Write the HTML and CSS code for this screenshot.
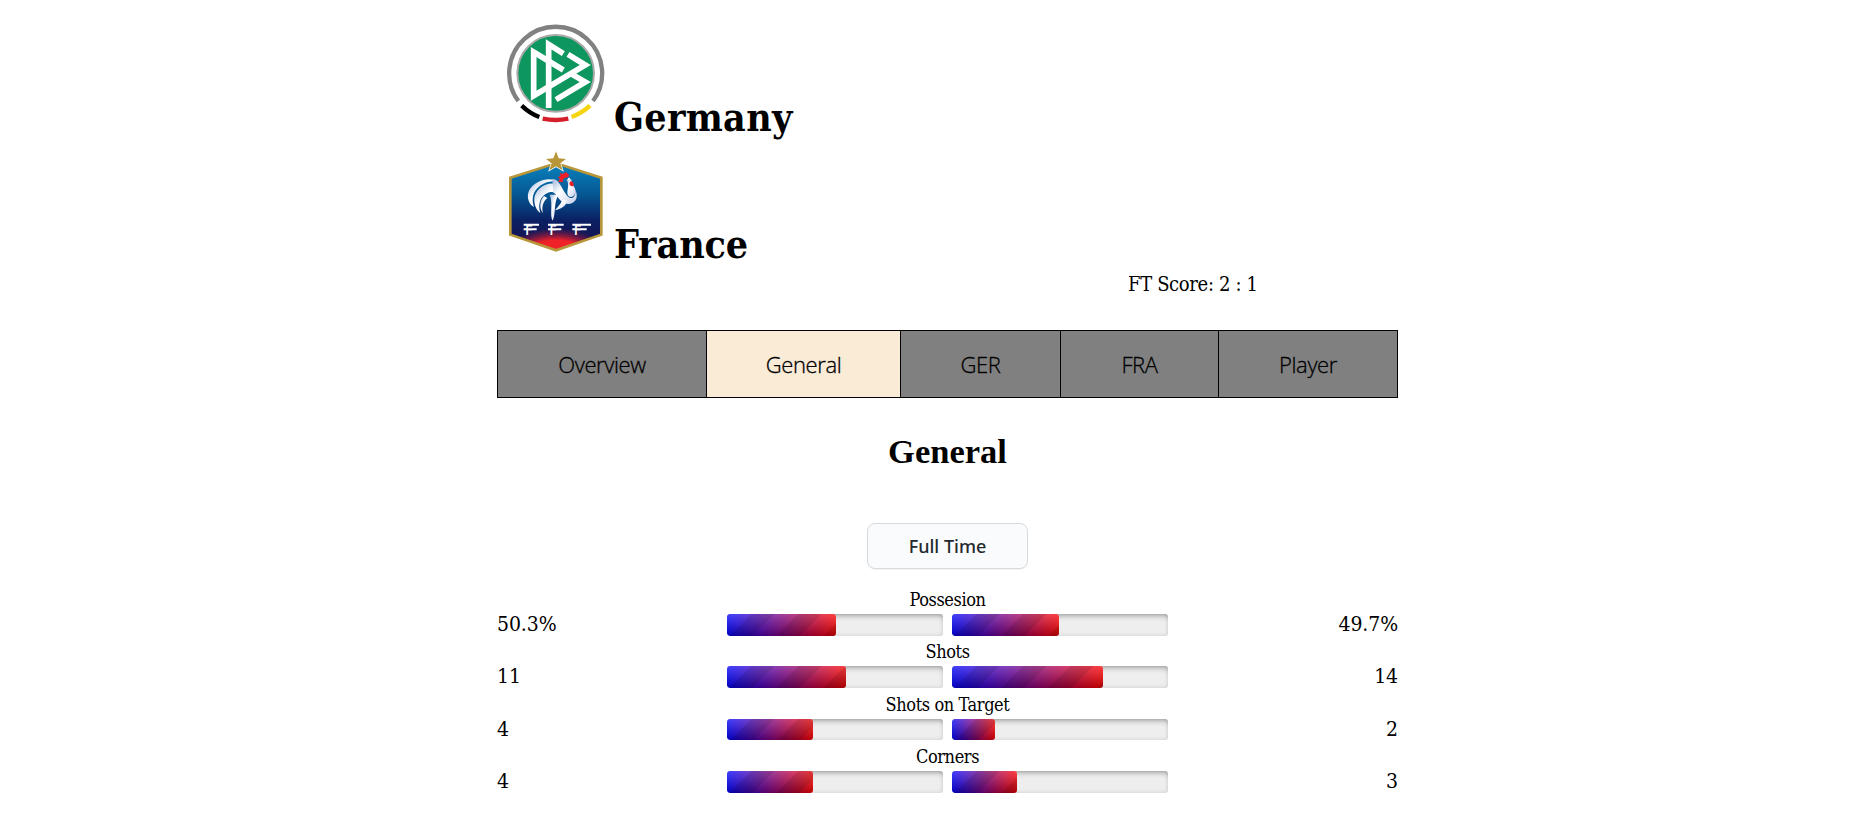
FILE: index.html
```html
<!DOCTYPE html>
<html lang="en">
<head>
<meta charset="utf-8">
<title>Germany vs France</title>
<link rel="stylesheet" href="styles.css">
</head>
<body>
<main class="match">
  <header class="teams">
    <h1 class="team">
      <svg class="crest" viewBox="0 0 330 330" aria-label="DFB">
        <g transform="translate(-30 -24)">
          <g fill="none" stroke-width="13">
            <path d="M85 273A139.500 139.500 0 1 1 309 273" stroke="#808281"/>
            <path d="M95 287Q120 311 148 321" stroke="#000"/>
            <path d="M158 326Q197 334 235 326" stroke="#d51f2b"/>
            <path d="M245 321Q278 308 300 287" stroke="#f6d40f"/>
          </g>
          <circle cx="197" cy="190" r="115" fill="#0e965f" stroke="#a9aaa9" stroke-width="6"/>
          <g fill="none" stroke="#fff" stroke-width="17">
            <path d="M176 294V103L220 131"/>
            <path d="M220 180L131 126V257L286 165L234 133"/>
            <path d="M241 190L286 216L198 269"/>
          </g>
        </g>
      </svg>
      <span class="team-name">Germany</span>
    </h1>
    <h1 class="team">
      <svg class="crest" viewBox="0 0 330 330" aria-label="FFF">
        <defs>
          <linearGradient id="shield" x1="0" y1="0" x2="0" y2="1">
            <stop offset="0" stop-color="#0a83bd"/>
            <stop offset=".38" stop-color="#055490"/>
            <stop offset=".66" stop-color="#0b1f62"/>
            <stop offset="1" stop-color="#1c0f4a"/>
          </linearGradient>
          <radialGradient id="glow" gradientUnits="userSpaceOnUse" cx="0" cy="0" r="1" gradientTransform="translate(167 325) scale(155 78)">
            <stop offset=".55" stop-color="#ee2028"/>
            <stop offset="1" stop-color="#a01840" stop-opacity="0"/>
          </radialGradient>
          <linearGradient id="feather" x1="0" y1="0" x2="1" y2="1">
            <stop offset="0" stop-color="#9fb4dc"/>
            <stop offset=".4" stop-color="#fff"/>
            <stop offset="1" stop-color="#c3cde8"/>
          </linearGradient>
        </defs>
        <g transform="translate(0 3)">
        <path d="M168 52L304 95V266L168 313L31 266V95Z" fill="url(#shield)"/>
        <path d="M168 52L304 95V266L168 313L31 266V95Z" fill="url(#glow)" stroke="#b8963a" stroke-width="8"/>
        <path d="M168 16L176 37L198 39L181 52L188 73L168 61L148 73L155 52L138 39L160 37Z" fill="#b8963a" stroke="#fff" stroke-width="4" paint-order="stroke"/>
        <g fill="url(#feather)">
          <path d="M176 107C146 90 105 103 88 132C77 154 88 176 102 183C94 157 98 136 120 119C137 107 156 104 176 107Z"/>
          <path d="M165 113C132 109 107 132 103 155C101 177 111 194 121 201C113 174 120 154 138 143C159 130 177 145 192 157C184 133 175 119 165 113Z"/>
          <path d="M132 150C119 162 117 186 129 202C124 180 130 166 142 156Z"/>
          <path d="M157 98C176 99 182 121 199 146C213 166 228 154 226 132C239 158 221 175 203 174C178 171 175 150 160 139Z"/>
          <path d="M199 101C208 110 203 127 202 140C202 153 217 159 224 145C234 127 214 119 214 101L207 97Z"/>
          <path d="M149 146L177 146C160 165 169 199 158 224C148 208 160 174 149 146Z"/>
          <path d="M203 165C195 183 183 188 165 193C178 178 184 170 188 159Z"/>
        </g>
        <path d="M174 107L180 98L173 94L182 89L179 82L191 83L197 78L207 86L205 94L195 95L189 101L188 109Z" fill="#ee1f27"/>
        <path d="M211 106Q222 106 221 119Q213 125 208 114Z" fill="#ee1f27"/>
        <circle cx="207" cy="98" r="3" fill="#fff"/>
        <text class="crest-text" x="75 148 221" y="266">FFF</text>
        <path d="M71 236H117M144 236H191M217 236H273M71 250H110M144 250H184M217 250H260" stroke="#fff" stroke-width="6"/>
        </g>
      </svg>
      <span class="team-name france">France</span>
    </h1>
  </header>
  <p class="score">FT Score: 2 : 1</p>
  <nav class="tabs">
    <a class="tab">Overview</a>
    <a class="tab active">General</a>
    <a class="tab">GER</a>
    <a class="tab">FRA</a>
    <a class="tab">Player</a>
  </nav>
  <h2 class="title">General</h2>
  <button class="period">Full Time</button>
  <section class="stats">
    <div class="stat">
      <span class="value">50.3%</span>
      <div class="middle"><span class="label">Possesion</span>
        <div class="meters"><div class="meter"><div class="fill" style="width:50.3%"></div></div><div class="meter"><div class="fill" style="width:49.7%"></div></div></div>
      </div>
      <span class="value right">49.7%</span>
    </div>
    <div class="stat">
      <span class="value">11</span>
      <div class="middle"><span class="label">Shots</span>
        <div class="meters"><div class="meter"><div class="fill" style="width:55%"></div></div><div class="meter"><div class="fill" style="width:70%"></div></div></div>
      </div>
      <span class="value right">14</span>
    </div>
    <div class="stat">
      <span class="value">4</span>
      <div class="middle"><span class="label">Shots on Target</span>
        <div class="meters"><div class="meter"><div class="fill" style="width:40%"></div></div><div class="meter"><div class="fill" style="width:20%"></div></div></div>
      </div>
      <span class="value right">2</span>
    </div>
    <div class="stat">
      <span class="value">4</span>
      <div class="middle"><span class="label">Corners</span>
        <div class="meters"><div class="meter"><div class="fill" style="width:40%"></div></div><div class="meter"><div class="fill" style="width:30%"></div></div></div>
      </div>
      <span class="value right">3</span>
    </div>
  </section>
</main>
</body>
</html>
```
FILE: styles.css
```css
* { box-sizing: border-box; }
body { margin: 0; background: #fff; color: #000; }
.match {
  width: 901px;
  margin-left: 497px;
  padding-top: 18px;
  display: flex;
  flex-direction: column;
  font-family: "DejaVu Serif Condensed", "DejaVu Serif", serif;
}
.team {
  display: flex;
  height: 127px;
  margin: 0;
  padding-left: 3px;
  gap: 4px;
  font-size: 39px;
  line-height: 46px;
}
.crest { width: 110px; height: 110px; flex: none; }
.crest-text { font: 600 42px "Open Sans", sans-serif; fill: #fff; }
.team-name { margin-top: 76px; letter-spacing: .3px; }
.team-name.france { letter-spacing: -.1px; }
.score {
  margin: 0;
  padding-left: 631px;
  height: 58px;
  font-size: 20px;
  line-height: 24px;
  letter-spacing: -.35px;
}
.tabs {
  display: grid;
  grid-template-columns: 208px 193px 159px 157px 178px;
  gap: 1px;
  width: 901px;
  height: 68px;
  padding: 1px;
  background: #000;
}
.tab {
  display: flex;
  align-items: center;
  justify-content: center;
  background: #808080;
  font: 300 22px "Open Sans", sans-serif;
  letter-spacing: -.4px;
  -webkit-text-stroke: .3px #000;
}
.tab.active { background: #faebd7; }
.title {
  margin: 33px 0 0;
  text-align: center;
  font: 700 34.500px/40px "Liberation Serif", serif;
}
.period {
  align-self: center;
  width: 161px;
  height: 46px;
  margin-top: 52px;
  border: 1px solid #d7dade;
  border-radius: 8px;
  background: #fafbfc;
  box-shadow: 0 1px 1px rgba(27, 31, 35, .04);
  color: #24292e;
  font: 500 18px "Noto Sans", sans-serif;
}
.stats { margin-top: 20.300px; }
.stat {
  display: grid;
  grid-template-columns: 230px 441px 230px;
  height: 52.200px;
}
.value { padding-top: 23px; font-size: 21px; line-height: 24px; letter-spacing: -.1px; }
.value.right { text-align: right; }
.label {
  display: block;
  height: 25px;
  text-align: center;
  font-size: 18px;
  line-height: 21px;
  letter-spacing: -.4px;
}
.meters { display: flex; gap: 9px; }
.meter {
  width: 216px;
  height: 21.800px;
  border-radius: 3px;
  overflow: hidden;
  background: #eee;
  box-shadow: 0 6px 6px -5px rgba(0, 0, 0, .35) inset, 0 0 4px rgba(0, 0, 0, .15) inset;
}
.fill {
  height: 100%;
  border-radius: 3px;
  background:
    repeating-linear-gradient(135deg, transparent 0 17.200px, rgba(0, 0, 0, .1) 17.200px 33.400px),
    linear-gradient(rgba(255, 255, 255, .25), rgba(0, 0, 0, .25)),
    linear-gradient(90deg, #00f, #f00);
}
```
